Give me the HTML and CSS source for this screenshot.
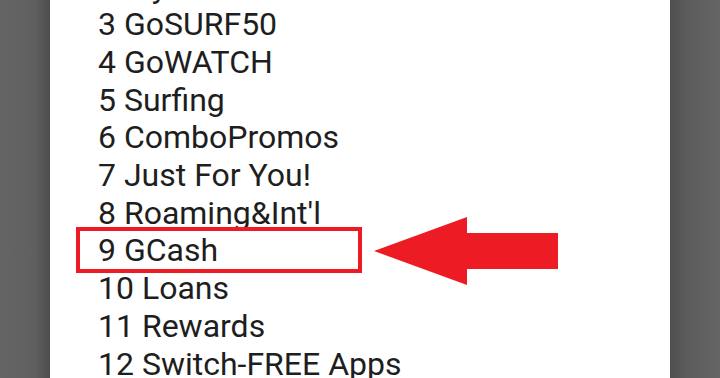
FILE: index.html
```html
<!DOCTYPE html>
<html>
<head>
<meta charset="utf-8">
<link rel="stylesheet" href="styles.css">
</head>
<body>
<div class="screen">
  <div class="side side-left"></div>
  <div class="dialog">
    <ul class="menu">
      <li>2 My Account</li>
      <li>3 GoSURF50</li>
      <li>4 GoWATCH</li>
      <li>5 Surfing</li>
      <li>6 ComboPromos</li>
      <li>7 Just For You!</li>
      <li>8 Roaming&amp;Int'l</li>
      <li class="marked">9 GCash
        <span class="highlight-box"></span>
        <svg class="arrow" width="184" height="68" viewBox="0 0 184 68">
          <polygon points="0,34 93,0 93,16 184,16 184,52 93,52 93,68" fill="#ed1c24"/>
        </svg>
      </li>
      <li>10 Loans</li>
      <li>11 Rewards</li>
      <li>12 Switch-FREE Apps</li>
    </ul>
  </div>
  <div class="side side-right"></div>
</div>
</body>
</html>
```

FILE: styles.css
```css
html, body {
  margin: 0;
  padding: 0;
  background: #5f5f5f;
}
.screen {
  display: flex;
  width: 720px;
  height: 378px;
  overflow: hidden;
}
.side {
  width: 50px;
  flex: none;
}
.side-left {
  background: linear-gradient(to right, #656565 0%, #5f5f5f 70%, #4d4d4d 100%);
}
.side-right {
  background: linear-gradient(to right, #4f4f4f 0%, #5c5c5c 35%, #656565 100%);
}
.dialog {
  width: 620px;
  flex: none;
  background: #ffffff;
  padding-left: 48px;
  box-sizing: border-box;
}
.menu {
  list-style: none;
  margin: -31.5px 0 0 0;
  padding: 0;
  font-family: Roboto, "Liberation Sans", sans-serif;
  font-size: 32px;
  line-height: 37.7px;
  color: #1e1e1e;
}
.menu li {
  white-space: nowrap;
}
.marked {
  position: relative;
}
.highlight-box {
  position: absolute;
  left: -22px;
  top: -5.4px;
  width: 286px;
  height: 46px;
  border: 4px solid #ed1c24;
  box-sizing: border-box;
}
.arrow {
  position: absolute;
  left: 276px;
  top: -15.4px;
}
```
